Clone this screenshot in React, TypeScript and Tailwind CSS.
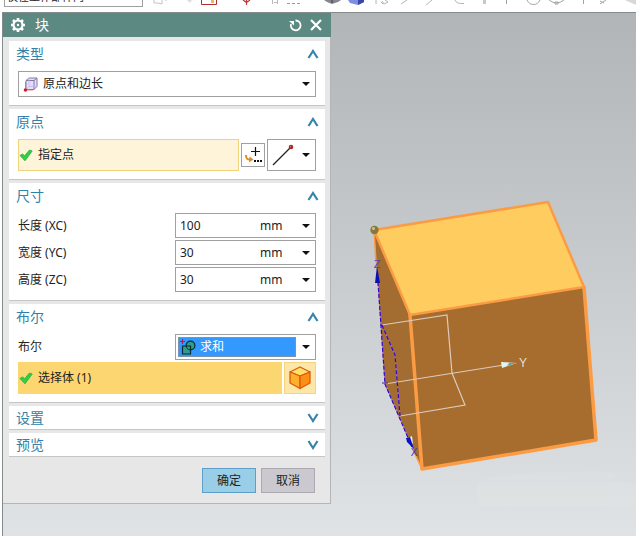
import { useState, type ReactNode } from 'react'

const CaretIcon = () => (
  <svg width="8" height="4" viewBox="0 0 8 4" className="pointer-events-none shrink-0" aria-hidden="true">
    <path d="M0 0H8L4 4Z" fill="#111" />
  </svg>
)

const CheckIcon = () => (
  <svg width="14" height="14" viewBox="0 0 14 14" className="shrink-0" aria-hidden="true">
    <path d="M1 7.500L3.600 6L5.600 7.800L10.500 2L13.200 3L6 12.800Z" fill="#2fd048" stroke="#1fae3a" strokeWidth="0.8" />
  </svg>
)

const GearIcon = () => (
  <svg width="14" height="14" viewBox="0 0 14 14" fill="none" stroke="#fff" aria-hidden="true">
    <circle cx="7" cy="7" r="4.500" strokeWidth="2.200" />
    <circle cx="7" cy="7" r="1.200" fill="#fff" stroke="none" />
    <path
      d="M7 0V2M7 12V14M0 7H2M12 7H14M2 2L3.500 3.500M10.500 10.500L12 12M2 12L3.500 10.500M10.500 3.500L12 2"
      strokeWidth="2.600"
    />
  </svg>
)

const ResetIcon = () => (
  <svg width="13" height="13" viewBox="0 0 13 13" fill="none" stroke="#fff" strokeWidth="1.8" aria-hidden="true">
    <path d="M6.500 1.500A4.900 4.900 0 1 1 2 5" />
    <path d="M0 2H5V6.500Z" fill="#fff" stroke="none" />
  </svg>
)

const CloseIcon = () => (
  <svg width="12" height="12" viewBox="0 0 12 12" stroke="#fff" strokeWidth="2.2" aria-hidden="true">
    <path d="M1 1L11 11M11 1L1 11" />
  </svg>
)

const WireBlockIcon = () => (
  <svg width="16" height="16" viewBox="0 0 16 16" aria-hidden="true">
    <path d="M3 4.5L6 2H14V10.5L11 13.5H3Z" fill="#e6defa" stroke="#8379a0" strokeWidth="1" />
    <path d="M3 4.5H11V13.5M11 4.5L14 2" fill="none" stroke="#8379a0" strokeWidth="1" />
    <path d="M6 2V10.5H14M6 10.5L3 13.5" fill="none" stroke="#c4b2ec" strokeWidth="0.8" />
    <path d="M2.500 6V14H10" fill="none" stroke="#d06a6a" strokeWidth="0.8" />
    <circle cx="2.4" cy="14" r="1.7" fill="#c81e1e" />
  </svg>
)

const PointDialogIcon = () => (
  <svg width="18" height="18" viewBox="0 0 18 18" fill="none" className="shrink-0" aria-hidden="true">
    <path d="M7 5.500H16M11.500 1V10" stroke="#111" strokeWidth="1.2" />
    <path d="M2 9C2 12.500 3 13.500 6 13.500" stroke="#e08a20" strokeWidth="2" />
    <path d="M5.500 10.500L9.500 13.500L5 16.500Z" fill="#e08a20" />
    <path d="M10 14H12V16H10ZM13 14H15V16H13ZM16 14H18V16H16Z" fill="#111" />
  </svg>
)

const EndPointIcon = () => (
  <svg width="22" height="22" viewBox="0 0 22 22" aria-hidden="true">
    <path d="M1 21L18 4" stroke="#222" strokeWidth="1.2" />
    <circle cx="19" cy="3" r="2.3" fill="#b02020" />
    <circle cx="18.5" cy="2.5" r="0.7" fill="#e08080" />
  </svg>
)

const UniteIcon = () => (
  <svg width="16" height="16" viewBox="0 0 16 16" fill="none" aria-hidden="true">
    <path d="M0 2.5H5M2.5 0V5" stroke="#b01858" strokeWidth="1.1" />
    <circle cx="10.5" cy="6.5" r="4.4" fill="#2f9c8c" stroke="#0b2b30" strokeWidth="1.2" />
    <path d="M2.5 7H10.5V15H2.5Z" fill="#2f9c8c" stroke="#0b2b30" strokeWidth="1.2" />
    <path d="M6.3 6.5A4.4 4.4 0 0 0 10.5 10.9" stroke="#0b2b30" strokeWidth="1" />
  </svg>
)

const SolidBodyIcon = () => (
  <svg width="22" height="24" viewBox="0 0 22 24" strokeLinejoin="round" aria-hidden="true">
    <path d="M11 1L21 6L11 10L1 6Z" fill="#ffe06a" stroke="#dc5a10" strokeWidth="1.3" />
    <path d="M1 6L11 10V22.500L1 17Z" fill="#ffb02a" stroke="#dc5a10" strokeWidth="1.3" />
    <path d="M21 6L11 10V22.500L21 17Z" fill="#ff8e14" stroke="#dc5a10" strokeWidth="1.3" />
  </svg>
)

const ToolbarIcons = () => (
  <svg width="493" height="12" viewBox="143 0 493 12" fill="none" className="shrink-0" aria-hidden="true">
    <path d="M154 0V3H158L162 4V0M166 0V1" stroke="#c4c4c8" />
    <path d="M187 0H192L190 3Z" fill="#dcdce2" />
    <path d="M201.5 0V4.5H216.5V0" stroke="#b03030" />
    <path d="M211 0H214V3H211Z" fill="#e8b860" />
    <path d="M246.5 0V5M243 0L246.5 2.5L250 0" stroke="#b83838" strokeWidth="1.2" />
    <path d="M272.5 0V4M274 2.5H278M277.5 0V4" stroke="#b8b8bc" />
    <path d="M287 3.5H302" stroke="#999" strokeDasharray="3 2" />
    <path d="M324 0H341L338 2L332 4L327 2Z" fill="#85858f" />
    <path d="M332 0V3" stroke="#3c3c48" />
    <path d="M348 0H364V2L358 5L350 3Z" fill="#7f8ce0" />
    <path d="M358 0H364V2L358 5Z" fill="#3747a8" />
    <path d="M376 0V4M381 2L383 4M385 0L388 2L384 4L382 1" stroke="#b4b4b4" />
    <path d="M407 0L401 4M432 0L426 5" stroke="#b4b4b4" />
    <path d="M455 0Q456 4 464 3.500" stroke="#b4b4b4" />
    <path d="M483 0H486V4H483Z" fill="#c8c8c8" />
    <path d="M506.500 0V4M583.500 0V4" stroke="#a4a4a4" />
    <path d="M527 0Q529 4.500 533.500 4.500T540 0M549 0Q553 3 556.500 3T564 0M555 2H558V4H555Z" stroke="#a4a4a4" />
    <path d="M606 0L600 4M600 1L604 3" stroke="#a4a4a4" />
    <path d="M625 0H636V5Z" fill="#d8d8d8" />
  </svg>
)

// Shaded block with its datum axes
const ModelView = () => (
  <svg width="305" height="523" viewBox="331 13 305 523" className="max-w-none shrink-0" role="img" aria-label="XYZ">
    <path
      d="M478 482Q474 494 480 506H600Q618 511 636 506V484Q622 481 600 482Q625 477 615 473Q600 470 570 472Q500 472 478 482Z"
      fill="#e4e7e8"
      opacity="0.25"
    />
    <path d="M374 230L410 315L422 469L385 383Z" fill="#a36c30" />
    <path d="M410 315L584 287L596 440L422 469Z" fill="#a66d2f" />
    <path d="M374 230L548 202L584 287L410 315Z" fill="#ffcc5f" />
    <g fill="none" stroke="#fb9c44" strokeLinejoin="round" strokeLinecap="round">
      <path d="M374 230L548 202L584 287L410 315Z" strokeWidth="2.5" />
      <path d="M584 287L596 440L422 469L410 315" strokeWidth="3.500" />
      <path d="M374 230L376 262M414 452L422 469" strokeWidth="1.5" />
    </g>
    <path d="M382 325L447 315L452 373L465 405L400 416M385 384L504 365" fill="none" stroke="#dccabb" strokeWidth="1.2" />
    <path d="M501 362L517 363L502 368Z" fill="#e6f4ee" />
    <path d="M507 366L517 363L509 363Z" fill="#5aa6a2" />
    <path d="M378 282L385 384L412 447M382 325L395 355L400 416" fill="none" stroke="#c66ab0" strokeWidth="1" />
    <path
      d="M378 282L385 384L412 447M382 325L395 355L400 416"
      fill="none"
      stroke="#2410c8"
      strokeWidth="1.2"
      strokeDasharray="4 2"
    />
    <path d="M382 383H388" stroke="#3a20c0" />
    <path d="M377 266L380 283H375Z" fill="#0c10b4" />
    <path d="M406 439L412 436L413 444Z" fill="#e8eef4" />
    <path d="M406 438L410 437L414 449L407 442Z" fill="#0c10c4" />
    <g fontFamily="Liberation Sans" textAnchor="middle">
      <text x="523" y="367" fontSize="12" fill="#e9ddd4">Y</text>
      <text x="377" y="268" fontSize="11" fill="#5344c4">Z</text>
      <text x="414" y="456" fontSize="10" fill="#4530bc">X</text>
    </g>
    <circle cx="374.500" cy="230" r="4.200" fill="#857a3c" />
    <circle cx="373.500" cy="228.500" r="1.500" fill="#cbc48d" />
  </svg>
)

type SectionProps = {
  title: string
  defaultOpen?: boolean
  children?: ReactNode
}

function Section({ title, defaultOpen = false, children }: SectionProps) {
  const [open, setOpen] = useState(defaultOpen)

  return (
    <section className="bg-white border-b border-[#c6c6c6]">
      <button
        type="button"
        onClick={() => setOpen(!open)}
        aria-expanded={open}
        className={`flex w-full items-center justify-between pl-[7px] pr-[6px] text-sm text-[#3182a8] ${
          open ? 'h-[26px]' : 'h-[23px]'
        }`}
      >
        <span>{title}</span>
        <svg width="12" height="10" viewBox="0 0 12 10" fill="none" stroke="#3585a9" strokeWidth="2.2" aria-hidden="true">
          <path d={open ? 'M1.500 9L6 2L10.500 9' : 'M1.500 1L6 8L10.500 1'} />
        </svg>
      </button>
      {open && <div className="px-[9px] pt-1 pb-2">{children}</div>}
    </section>
  )
}

const dimensions = [
  { id: 'xc', label: '长度 (XC)', value: '100' },
  { id: 'yc', label: '宽度 (YC)', value: '30' },
  { id: 'zc', label: '高度 (ZC)', value: '30' }
]

function BlockDialog() {
  return (
    <form className="w-[328px] shrink-0 bg-[#e7e7e7] border-r border-b border-[#b5b5b5]" onSubmit={(e) => e.preventDefault()}>
      {/* Title bar */}
      <header className="-mr-px flex h-6 items-center bg-[#5c8a82] pl-2 pr-[9px] text-white">
        <GearIcon />
        <h1 className="ml-[10px] flex-1 text-sm">块</h1>
        <button type="button" aria-label="重置" className="mr-2">
          <ResetIcon />
        </button>
        <button type="button" aria-label="关闭">
          <CloseIcon />
        </button>
      </header>

      <div className="flex flex-col gap-[3px] pt-1 pl-[6px] pr-[5px]">
        <Section title="类型" defaultOpen>
          <div className="relative h-[26px] border border-[#a0a0a0]">
            <span className="pointer-events-none absolute left-1 top-1">
              <WireBlockIcon />
            </span>
            <select aria-label="类型" className="h-full w-full appearance-none bg-transparent pl-6">
              <option>原点和边长</option>
            </select>
            <span className="pointer-events-none absolute right-[5px] top-[10px]">
              <CaretIcon />
            </span>
          </div>
        </Section>

        <Section title="原点" defaultOpen>
          <div className="flex h-8 items-center gap-[2px]">
            <button type="button" className="flex h-full flex-1 items-center gap-[5px] border border-[#f0d47c] bg-[#fdf4d9]">
              <CheckIcon />
              <span>指定点</span>
            </button>
            <button
              type="button"
              aria-label="点对话框"
              className="flex h-6 w-6 items-center justify-center border border-[#a0a0a0]"
            >
              <PointDialogIcon />
            </button>
            <button
              type="button"
              aria-label="端点"
              className="flex h-full w-[49px] items-center justify-between border border-[#a0a0a0] pl-1 pr-[5px]"
            >
              <EndPointIcon />
              <CaretIcon />
            </button>
          </div>
        </Section>

        <Section title="尺寸" defaultOpen>
          <div className="flex flex-col gap-[2px]">
            {dimensions.map((dim) => (
              <div key={dim.id} className="flex items-center justify-between">
                <label htmlFor={dim.id}>{dim.label}</label>
                <div className="flex h-[25px] w-[141px] items-center border border-[#a0a0a0] pl-1 pr-[5px]">
                  <input id={dim.id} type="text" defaultValue={dim.value} className="w-20 min-w-0 bg-transparent" />
                  <span className="flex-1">mm</span>
                  <button type="button" aria-label="选项">
                    <CaretIcon />
                  </button>
                </div>
              </div>
            ))}
          </div>
        </Section>

        <Section title="布尔" defaultOpen>
          <div className="flex items-center justify-between">
            <label htmlFor="boolean">布尔</label>
            <div className="relative flex h-[26px] w-[141px] items-center justify-between border border-[#a0a0a0] pl-[2px] pr-[5px]">
              <select
                id="boolean"
                className="h-5 w-[118px] appearance-none border border-[#7d93ad] bg-[#3399ff] pl-[21px] text-white"
              >
                <option>求和</option>
              </select>
              <span className="pointer-events-none absolute left-1 top-1">
                <UniteIcon />
              </span>
              <CaretIcon />
            </div>
          </div>
          <div className="mt-[2px] flex h-8 gap-[2px]">
            <button type="button" className="flex flex-1 items-center gap-[5px] border border-[#fcd670] bg-[#fcd670]">
              <CheckIcon />
              <span>选择体 (1)</span>
            </button>
            <button
              type="button"
              aria-label="体"
              className="flex w-8 items-center justify-center border border-[#f6d37c] bg-[#fce7a8]"
            >
              <SolidBodyIcon />
            </button>
          </div>
        </Section>

        <Section title="设置" />
        <Section title="预览" />
      </div>

      <footer className="flex justify-end gap-[5px] pt-[11px] pr-[15px] pb-[10px]">
        <button type="submit" className="h-[25px] w-[54px] border border-[#5b9fca] bg-[#9acde6]">
          确定
        </button>
        <button type="button" className="h-[25px] w-[54px] border border-[#aaaab0] bg-[#cbc9cf]">
          取消
        </button>
      </footer>
    </form>
  )
}

export default function App() {
  return (
    <div className="flex min-h-screen flex-col bg-white font-['Noto_Sans','Noto_Sans_CJK_SC',sans-serif] text-xs text-[#222]">
      {/* Selection toolbar */}
      <div className="flex h-3 items-end overflow-hidden pl-1">
        <select
          aria-label="选择范围"
          className="mb-[5px] h-5 w-[139px] shrink-0 appearance-none border border-[#a0a0a0] bg-white pl-[2px] text-[11px]"
        >
          <option>仅在工作部件内</option>
        </select>
        <ToolbarIcons />
      </div>

      {/* Graphics window */}
      <main className="ml-[2px] flex flex-1 items-start overflow-hidden border-t border-l border-[#858b8d] bg-linear-to-b from-[#b1b5b7] to-[#dfe3e5]">
        <BlockDialog />
        <ModelView />
      </main>
    </div>
  )
}
